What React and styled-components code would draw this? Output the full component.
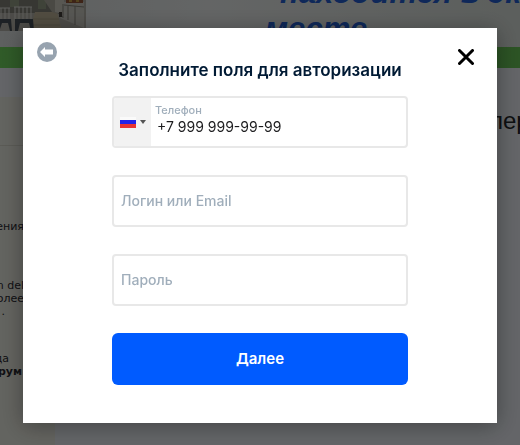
import styled, { createGlobalStyle } from 'styled-components';

const GlobalStyle = createGlobalStyle`
  * {
    box-sizing: border-box;
  }
  body {
    margin: 0;
    overflow: hidden;
    font-family: 'Inter', 'Liberation Sans', sans-serif;
  }
  p, h1, h2 {
    margin: 0;
  }
`

const StyledPage = styled.div`
  height: 100vh;
  overflow: hidden;
  display: flex;
  flex-direction: column;
  background: #f2f6fc;
`
const StyledHero = styled.header`
  flex: none;
  display: flex;
  justify-content: space-between;
  height: 47px;
  overflow: hidden;
  background: linear-gradient(90deg, #e4e9e9, #f2f5f5 40%, #dfe6e1);
`
const StyledHeroTitle = styled.h1`
  width: 255px;
  margin: -25px 0 0;
  font-family: 'Liberation Sans', Arial, sans-serif;
  font-style: italic;
  font-weight: 700;
  font-size: 31px;
  line-height: 36px;
  color: #2563d8;
  white-space: nowrap;
`
const StyledHeroLine = styled.span`
  display: block;
  padding: 0 0 0 ${props => props.indent || '0'};
`
const StyledStripe = styled.div`
  flex: none;
  height: 21px;
  background: linear-gradient(90deg, #74dc62, #6ccb5a);
`
const StyledColumns = styled.div`
  flex: 1;
  display: flex;
  justify-content: space-between;
  padding: 29px 0 0;
`
const StyledSidebar = styled.aside`
  width: 55px;
  overflow: hidden;
  background: #f1f2e8;
  font-family: 'DejaVu Sans', Verdana, sans-serif;
  font-size: 11px;
  line-height: 13px;
  color: #2b2b33;
`
const StyledSidebarHead = styled.div`
  height: 49px;
  border-bottom: 1px solid #dcdcd0;
`
const StyledSidebarText = styled.p`
  display: flex;
  justify-content: flex-end;
  width: ${props => props.width || '24px'};
  margin: ${props => props.margin || '0'};
  font-weight: ${props => props.weight || 400};
  white-space: nowrap;
`
const StyledPageTitle = styled.h2`
  width: 31px;
  margin: 10px 0 0;
  font-family: 'Liberation Sans', Arial, sans-serif;
  font-weight: 400;
  font-size: 24px;
  line-height: 28px;
  color: #22262a;
`

const StyledOverlay = styled.div`
  position: fixed;
  inset: 0;
  display: flex;
  align-items: flex-start;
  padding: 28px 23px 22px;
  background: rgba(0, 0, 0, 0.59);
`
const StyledModal = styled.div`
  position: relative;
  flex: 1;
  min-width: 0;
  padding: 30px 89px 38px;
  background: #fff;
  box-shadow: 0 3px 22px rgba(0, 0, 0, 0.35);
`
const StyledIconButton = styled.button`
  position: absolute;
  top: ${props => props.top};
  left: ${props => props.left || 'auto'};
  right: ${props => props.right || 'auto'};
  display: flex;
  padding: 0;
  border: 0;
  background: none;
  cursor: pointer;
`
const StyledTitle = styled.h2`
  font-weight: 600;
  font-size: 17px;
  line-height: 24px;
  text-align: center;
  color: #001a34;
  white-space: nowrap;
`
const StyledForm = styled.form`
  display: flex;
  flex-direction: column;
  gap: 27px;
  margin: 14px 0 0;
`
const StyledField = styled.div`
  display: flex;
  height: 52px;
  overflow: hidden;
  border: 2px solid #e8e8e8;
  border-radius: 4px;
  background: #fff;
`
const StyledCountry = styled.button`
  display: flex;
  align-items: center;
  gap: 4px;
  width: 37px;
  padding: 0 0 0 6px;
  border: 0;
  background: #f2f2f2;
`
const StyledPhone = styled.div`
  flex: 1;
  display: flex;
  flex-direction: column;
  padding: 5px 4px 0;
`
const StyledLabel = styled.label`
  font-weight: 500;
  font-size: 11px;
  line-height: 14px;
  color: #a0aebb;
`
const StyledInput = styled.input`
  width: 100%;
  padding: ${props => props.pad || '0 7px'};
  border: 0;
  outline: 0;
  background: none;
  font-family: inherit;
  font-weight: ${props => props.weight || 500};
  font-size: 14px;
  line-height: 20px;
  color: #1c1c1e;
  &::placeholder {
    color: #a0aebb;
    opacity: 1;
  }
`
const StyledSubmit = styled.button`
  height: 52px;
  border: 0;
  border-radius: 6px;
  background: #005bff;
  font-family: inherit;
  font-weight: 600;
  font-size: 15px;
  line-height: 20px;
  color: #fff;
  cursor: pointer;
`

const KitchenPhoto = () => (
  <svg width="86" height="31" viewBox="0 0 86 31" aria-hidden="true">
    <rect width="86" height="31" fill="#b9b7ae" />
    <rect width="56" height="13" fill="#85867c" />
    <path d="M10 0h9v7h-9zM38 0h8v9h-8z" fill="#9aa38a" />
    <path d="M35 12h22l5 19H30z" fill="#c6bb9f" />
    <path d="M33 19h26M31 25h29" stroke="#aea58c" />
    <path d="M44 0h14v14l-6-2z" fill="#b5b2a6" />
    <path d="M55 0h9v14l-9-2z" fill="#d6d3c8" />
    <path d="M64 2h20v26l-24-10z" fill="#d3d2ca" />
    <path d="M66 0h17v3H66z" fill="#96583c" />
    <path d="M69 0h3v2h-3zM76 0h3v2h-3z" fill="#c9a24a" />
    <path d="M58 13l5 4M63 4v14M68 6v14M75 6v19M64 5l20 2" stroke="#8c8a80" fill="none" />
    <path d="M59 12h3v5h-3z" fill="#45413c" />
    <path d="M0 8h10M14 7h18M1 8v11M5 8v11M9 8v11M15 7v12M19 7v12M23 7v12M27 7v12M31 7v12" stroke="#e2e2dc" fill="none" />
    <path d="M0 19h11l1 12h-2l-2-8H2l-2 6zM15 19h18l1 12h-3l-2-8H20l-2 8h-3z" fill="#48525a" />
  </svg>
)

const BackIcon = () => (
  <svg width="20" height="20" viewBox="0 0 20 20" aria-hidden="true">
    <circle cx="10" cy="10" r="10" fill="#97a3af" />
    <path d="M3 10l5-5v2.5h8v5H8V15z" fill="#fff" />
  </svg>
)

const CloseIcon = () => (
  <svg width="16" height="16" viewBox="0 0 16 16" aria-hidden="true">
    <path d="M1.5 1.5l13 13M14.5 1.5l-13 13" stroke="#000" strokeWidth="3" strokeLinecap="round" />
  </svg>
)

const FlagIcon = () => (
  <svg width="16" height="11" viewBox="0 0 16 11" aria-hidden="true">
    <rect width="16" height="4" fill="#fafafa" />
    <rect y="3" width="16" height="5" fill="#2323e8" />
    <rect y="7" width="16" height="4" fill="#e83434" />
  </svg>
)

const ArrowIcon = () => (
  <svg width="6" height="4" viewBox="0 0 6 4" aria-hidden="true">
    <path d="M0 0h6L3 4z" fill="#555" />
  </svg>
)

const App = () => {
  return (
    <>
      <GlobalStyle />
      <StyledPage>
        <StyledHero>
          <KitchenPhoto />
          <StyledHeroTitle>
            <StyledHeroLine indent="15px">находится в эк</StyledHeroLine>
            <StyledHeroLine>месте</StyledHeroLine>
          </StyledHeroTitle>
        </StyledHero>
        <StyledStripe />
        <StyledColumns>
          <StyledSidebar>
            <StyledSidebarHead />
            <StyledSidebarText margin="74px 0 0">ения</StyledSidebarText>
            <StyledSidebarText margin="46px 0 0">n del</StyledSidebarText>
            <StyledSidebarText>олее</StyledSidebarText>
            <StyledSidebarText width="5px">.</StyledSidebarText>
            <StyledSidebarText margin="34px 0 0" width="9px">да</StyledSidebarText>
            <StyledSidebarText width="22px" weight={700}>рум</StyledSidebarText>
          </StyledSidebar>
          <StyledPageTitle>лер</StyledPageTitle>
        </StyledColumns>
      </StyledPage>

      <StyledOverlay>
        <StyledModal role="dialog" aria-labelledby="auth-title">
          <StyledIconButton type="button" top="14px" left="14px" aria-label="Назад">
            <BackIcon />
          </StyledIconButton>
          <StyledIconButton type="button" top="21px" right="23px" aria-label="Закрыть">
            <CloseIcon />
          </StyledIconButton>
          <StyledTitle id="auth-title">Заполните поля для авторизации</StyledTitle>
          <StyledForm>
            <StyledField>
              <StyledCountry type="button" aria-label="Россия">
                <FlagIcon />
                <ArrowIcon />
              </StyledCountry>
              <StyledPhone>
                <StyledLabel htmlFor="phone">Телефон</StyledLabel>
                <StyledInput id="phone" type="tel" pad="0 2px" weight={400} defaultValue="+7 999 999-99-99" />
              </StyledPhone>
            </StyledField>
            <StyledField>
              <StyledInput type="text" placeholder="Логин или Email" aria-label="Логин или Email" />
            </StyledField>
            <StyledField>
              <StyledInput type="password" placeholder="Пароль" aria-label="Пароль" />
            </StyledField>
            <StyledSubmit type="submit">Далее</StyledSubmit>
          </StyledForm>
        </StyledModal>
      </StyledOverlay>
    </>
  );
};

export default App;
